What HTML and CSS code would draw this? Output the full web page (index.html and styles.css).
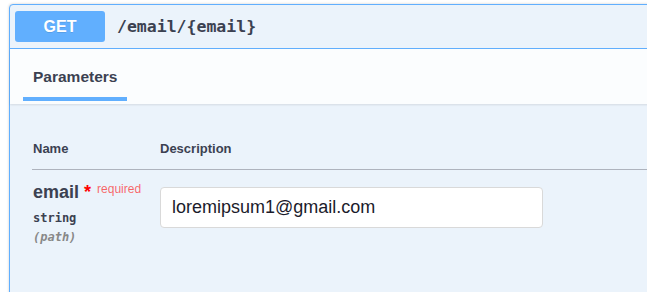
FILE: index.html
```html
<!DOCTYPE html>
<html lang="en">
<head>
    <meta charset="UTF-8">
    <meta name="viewport" content="width=device-width, initial-scale=1.0">
    <title>GET /email/{email}</title>
    <link rel="stylesheet" href="styles.css">
</head>
<body>
    <div class="opblock">
        <div class="summary">
            <span class="method">GET</span>
            <span class="path">/email/{email}</span>
        </div>
        <div class="section-header">
            <div class="tab">
                <div class="tab-title">Parameters</div>
                <div class="tab-bar"></div>
            </div>
        </div>
        <div class="params">
            <div class="param-head">
                <div>Name</div>
                <div>Description</div>
            </div>
            <div class="param-row">
                <div class="param-name">
                    <div class="name-line">email<span class="star">&nbsp;*</span><span class="required">required</span></div>
                    <div class="type">string</div>
                    <div class="in">(path)</div>
                </div>
                <div class="param-value">
                    <input class="text-input" type="text" value="loremipsum1@gmail.com">
                </div>
            </div>
        </div>
    </div>
</body>
</html>
```

FILE: styles.css
```css
body {
    margin: 0;
    background-color: #fff;
    font-family: "Liberation Sans", Arial, sans-serif;
    color: #3b4151;
    overflow: hidden;
}
.opblock {
    margin: 4px 0 0 9px;
    width: 700px;
    min-height: 320px;
    border: 1px solid #61affe;
    border-radius: 4px;
    background-color: #ebf3fb;
    box-shadow: 0 0 3px rgba(0,0,0,0.19);
}
.summary {
    display: flex;
    align-items: center;
    height: 33px;
    padding: 5px;
    border-bottom: 1px solid #61affe;
}
.method {
    display: flex;
    justify-content: center;
    align-items: center;
    width: 90px;
    height: 31px;
    border-radius: 3px;
    background-color: #61affe;
    color: #fff;
    font-size: 16px;
    font-weight: bold;
    text-shadow: 0 1px 0 rgba(0,0,0,0.1);
}
.path {
    margin-left: 12px;
    font-family: "DejaVu Sans Mono", "Liberation Mono", monospace;
    font-size: 16.5px;
    font-weight: bold;
    color: #3b4151;
}
.section-header {
    height: 55px;
    padding-left: 13px;
    background-color: rgba(255,255,255,0.8);
    box-shadow: 0 1px 2px rgba(0,0,0,0.1);
}
.tab {
    display: flex;
    flex-direction: column;
    width: 104px;
    padding-top: 19px;
}
.tab-title {
    padding-left: 10px;
    font-size: 15.5px;
    line-height: 17px;
    font-weight: bold;
}
.tab-bar {
    height: 4px;
    margin-top: 12px;
    background-color: #61affe;
}
.params {
    padding: 37px 0 0 22px;
}
.param-head {
    display: grid;
    grid-template-columns: 128px 1fr;
    padding-bottom: 12px;
    border-bottom: 1px solid #aeb3bd;
    font-size: 13px;
    line-height: 16px;
    font-weight: bold;
}
.param-head div:first-child {
    padding-left: 1px;
}
.param-row {
    display: grid;
    grid-template-columns: 128px 1fr;
    padding-top: 12px;
}
.param-name {
    padding-left: 1px;
}
.name-line {
    font-size: 18px;
    line-height: 21px;
    font-weight: bold;
    margin-bottom: 6px;
}
.star {
    color: red;
}
.required {
    padding-left: 6px;
    font-size: 12px;
    line-height: 1;
    font-weight: normal;
    vertical-align: 5px;
    color: rgba(255,0,0,0.6);
}
.type, .in {
    font-family: "DejaVu Sans Mono", "Liberation Mono", monospace;
    font-size: 12px;
    line-height: 19px;
    font-weight: 600;
}
.in {
    font-style: italic;
    color: #888;
}
.param-value {
    padding-top: 5px;
}
.text-input {
    box-sizing: border-box;
    width: 383px;
    height: 41px;
    padding: 0 11px;
    border: 1px solid #d9d9d9;
    border-radius: 4px;
    background-color: #fff;
    font-family: "Liberation Sans", Arial, sans-serif;
    font-size: 18px;
    color: #1b1b2b;
    outline: none;
}
```
